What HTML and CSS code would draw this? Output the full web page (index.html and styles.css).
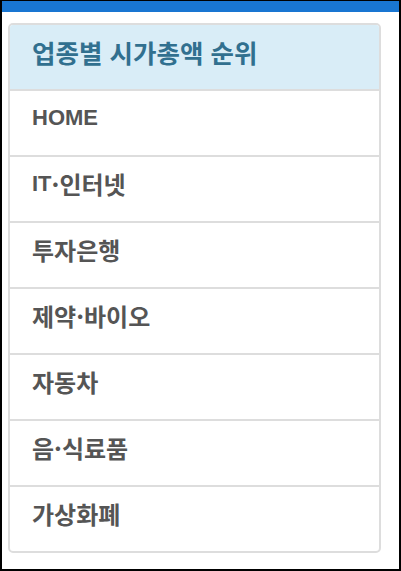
FILE: index.html
```html
<!DOCTYPE html>
<html lang="ko">
<head>
<meta charset="utf-8">
<link rel="stylesheet" href="styles.css">
</head>
<body>
<div class="frame">
  <div class="topbar"></div>
  <div class="content">
    <div class="panel">
      <div class="panel-heading">업종별 시가총액 순위</div>
      <ul class="list">
        <li class="item"><span class="en">HOME</span></li>
        <li class="item"><span class="en">IT</span>·인터넷</li>
        <li class="item">투자은행</li>
        <li class="item">제약·바이오</li>
        <li class="item">자동차</li>
        <li class="item">음·식료품</li>
        <li class="item">가상화폐</li>
      </ul>
    </div>
  </div>
</div>
</body>
</html>
```

FILE: styles.css
```css
html, body {
  margin: 0;
  padding: 0;
  background: #fff;
}
.frame {
  width: 401px;
  height: 571px;
  box-sizing: border-box;
  border: 2px solid #000;
  border-top-width: 1px;
  font-family: "Noto Sans CJK KR", "Liberation Sans", sans-serif;
  font-weight: bold;
}
.topbar {
  height: 11px;
  background: #1976d2;
}
.content {
  padding: 11px 18px 0 6px;
}
.panel {
  border: 2px solid #ddd;
  border-radius: 5px;
  overflow: hidden;
}
.panel-heading {
  box-sizing: border-box;
  height: 66px;
  background: #d9edf7;
  color: #31708f;
  font-size: 25.5px;
  line-height: 30px;
  display: flex;
  align-items: center;
  padding: 0 0 10px 22px;
  border-bottom: 2px solid #ddd;
}
.list {
  list-style: none;
  margin: 0;
  padding: 0;
}
.item {
  box-sizing: border-box;
  height: 64px;
  display: flex;
  align-items: center;
  padding: 0 0 10px 22px;
  font-size: 24px;
  line-height: 30px;
  color: #555;
}
.item + .item {
  height: 66px;
  border-top: 2px solid #ddd;
}
.en {
  font-family: "Liberation Sans", sans-serif;
  font-size: 22px;
}
```
